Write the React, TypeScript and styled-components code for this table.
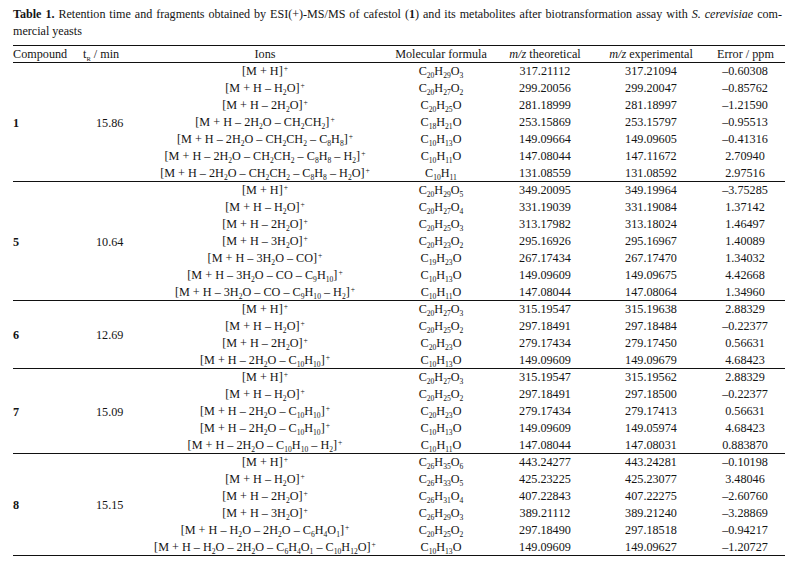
import React from "react";
import styled, { createGlobalStyle } from "styled-components";

const GlobalStyle = createGlobalStyle`
  html, body { margin: 0; padding: 0; background: #ffffff; }
  body {
    font-family: "Liberation Serif", "Times New Roman", serif;
    color: #141414;
  }
`;

const COLS = "70px 70px 224px 128px 80px 132px 68px";
const ROW_H = 17;

const Page = styled.div`
  width: 794px;
  height: 569px;
  box-sizing: border-box;
  padding: 6px 9px 0 13px;
`;

const Caption = styled.div`
  font-size: 12.1px;
  line-height: 17px;
  margin-bottom: 5px;
`;

const CaptionLine = styled.div<{ $justify?: boolean }>`
  text-align: ${(p) => (p.$justify ? "justify" : "left")};
  text-align-last: ${(p) => (p.$justify ? "justify" : "left")};
  word-spacing: ${(p) => (p.$justify ? "-1px" : "0")};
  padding-right: ${(p) => (p.$justify ? "3px" : "0")};
`;

const Table = styled.div`
  width: 772px;
  font-size: 12.2px;
`;

const HeaderRow = styled.div`
  display: grid;
  grid-template-columns: ${COLS};
  height: 18px;
  box-sizing: border-box;
  border-top: 1px solid #111;
  border-bottom: 1px solid #111;
  line-height: 16px;
  white-space: nowrap;
`;

const HeadCell = styled.div<{ $align?: "left" | "center"; $pr?: number }>`
  text-align: ${(p) => p.$align ?? "center"};
  padding-right: ${(p) => p.$pr ?? 0}px;
`;

const Group = styled.div<{ $rows: number }>`
  display: grid;
  grid-template-columns: ${COLS};
  grid-template-rows: repeat(${(p) => p.$rows}, ${ROW_H}px);
  height: ${(p) => p.$rows * ROW_H}px;
  box-sizing: border-box;
  border-bottom: 1px solid #111;
  line-height: ${ROW_H}px;
  white-space: nowrap;
`;

const CompoundCell = styled.div`
  grid-column: 1;
  grid-row: 1 / -1;
  align-self: center;
  font-weight: bold;
  padding-top: 1px;
`;

const TimeCell = styled.div`
  grid-column: 2;
  grid-row: 1 / -1;
  align-self: center;
  padding-left: 13px;
  padding-top: 1px;
`;

const Cell = styled.div<{ $pr?: number }>`
  text-align: center;
  padding-right: ${(p) => p.$pr ?? 0}px;
`;

const Sub = styled.sub<{ $size?: number }>`
  font-size: ${(p) => p.$size ?? 7.6}px;
  line-height: 0;
  vertical-align: baseline;
  position: relative;
  top: 2.6px;
`;

const Sup = styled.sup`
  font-size: 7.6px;
  line-height: 0;
  vertical-align: baseline;
  position: relative;
  top: -4px;
  margin-left: 1px;
`;

function chem(s: string) {
  const parts = s.split(/(_\{[^}]*\}|\^\{[^}]*\})/);
  return parts.map((p, i) => {
    if (p.startsWith("_{")) return <Sub key={i}>{p.slice(2, -1)}</Sub>;
    if (p.startsWith("^{")) return <Sup key={i}>{p.slice(2, -1)}</Sup>;
    return <React.Fragment key={i}>{p}</React.Fragment>;
  });
}

type Row = [string, string, string, string, string];
type GroupData = { id: string; tr: string; rows: Row[] };

const data: GroupData[] = [
  {
    id: "1",
    tr: "15.86",
    rows: [
      ["[M + H]^{+}", "C_{20}H_{29}O_{3}", "317.21112", "317.21094", "–0.60308"],
      ["[M + H – H_{2}O]^{+}", "C_{20}H_{27}O_{2}", "299.20056", "299.20047", "–0.85762"],
      ["[M + H – 2H_{2}O]^{+}", "C_{20}H_{25}O", "281.18999", "281.18997", "–1.21590"],
      ["[M + H – 2H_{2}O – CH_{2}CH_{2}]^{+}", "C_{18}H_{21}O", "253.15869", "253.15797", "–0.95513"],
      ["[M + H – 2H_{2}O – CH_{2}CH_{2} – C_{8}H_{8}]^{+}", "C_{10}H_{13}O", "149.09664", "149.09605", "–0.41316"],
      ["[M + H – 2H_{2}O – CH_{2}CH_{2} – C_{8}H_{8} – H_{2}]^{+}", "C_{10}H_{11}O", "147.08044", "147.11672", "2.70940"],
      ["[M + H – 2H_{2}O – CH_{2}CH_{2} – C_{8}H_{8} – H_{2}O]^{+}", "C_{10}H_{11}", "131.08559", "131.08592", "2.97516"],
    ],
  },
  {
    id: "5",
    tr: "10.64",
    rows: [
      ["[M + H]^{+}", "C_{20}H_{29}O_{5}", "349.20095", "349.19964", "–3.75285"],
      ["[M + H – H_{2}O]^{+}", "C_{20}H_{27}O_{4}", "331.19039", "331.19084", "1.37142"],
      ["[M + H – 2H_{2}O]^{+}", "C_{20}H_{25}O_{3}", "313.17982", "313.18024", "1.46497"],
      ["[M + H – 3H_{2}O]^{+}", "C_{20}H_{23}O_{2}", "295.16926", "295.16967", "1.40089"],
      ["[M + H – 3H_{2}O – CO]^{+}", "C_{19}H_{23}O", "267.17434", "267.17470", "1.34032"],
      ["[M + H – 3H_{2}O – CO – C_{9}H_{10}]^{+}", "C_{10}H_{13}O", "149.09609", "149.09675", "4.42668"],
      ["[M + H – 3H_{2}O – CO – C_{9}H_{10} – H_{2}]^{+}", "C_{10}H_{11}O", "147.08044", "147.08064", "1.34960"],
    ],
  },
  {
    id: "6",
    tr: "12.69",
    rows: [
      ["[M + H]^{+}", "C_{20}H_{27}O_{3}", "315.19547", "315.19638", "2.88329"],
      ["[M + H – H_{2}O]^{+}", "C_{20}H_{25}O_{2}", "297.18491", "297.18484", "–0.22377"],
      ["[M + H – 2H_{2}O]^{+}", "C_{20}H_{23}O", "279.17434", "279.17450", "0.56631"],
      ["[M + H – 2H_{2}O – C_{10}H_{10}]^{+}", "C_{10}H_{13}O", "149.09609", "149.09679", "4.68423"],
    ],
  },
  {
    id: "7",
    tr: "15.09",
    rows: [
      ["[M + H]^{+}", "C_{20}H_{27}O_{3}", "315.19547", "315.19562", "2.88329"],
      ["[M + H – H_{2}O]^{+}", "C_{20}H_{25}O_{2}", "297.18491", "297.18500", "–0.22377"],
      ["[M + H – 2H_{2}O – C_{10}H_{10}]^{+}", "C_{20}H_{23}O", "279.17434", "279.17413", "0.56631"],
      ["[M + H – 2H_{2}O – C_{10}H_{10}]^{+}", "C_{10}H_{13}O", "149.09609", "149.05974", "4.68423"],
      ["[M + H – 2H_{2}O – C_{10}H_{10} – H_{2}]^{+}", "C_{10}H_{11}O", "147.08044", "147.08031", "0.883870"],
    ],
  },
  {
    id: "8",
    tr: "15.15",
    rows: [
      ["[M + H]^{+}", "C_{26}H_{35}O_{6}", "443.24277", "443.24281", "–0.10198"],
      ["[M + H – H_{2}O]^{+}", "C_{26}H_{33}O_{5}", "425.23225", "425.23077", "3.48046"],
      ["[M + H – 2H_{2}O]^{+}", "C_{26}H_{31}O_{4}", "407.22843", "407.22275", "–2.60760"],
      ["[M + H – 3H_{2}O]^{+}", "C_{26}H_{29}O_{3}", "389.21112", "389.21240", "–3.28869"],
      ["[M + H – H_{2}O – 2H_{2}O – C_{6}H_{4}O_{1}]^{+}", "C_{20}H_{25}O_{2}", "297.18490", "297.18518", "–0.94217"],
      ["[M + H – H_{2}O – 2H_{2}O – C_{6}H_{4}O_{1} – C_{10}H_{12}O]^{+}", "C_{10}H_{13}O", "149.09609", "149.09627", "–1.20727"],
    ],
  },
];

export default function App() {
  return (
    <>
      <GlobalStyle />
      <Page>
        <Caption>
          <CaptionLine $justify>
            <b>Table 1.</b> Retention time and fragments obtained by ESI(+)-MS/MS of cafestol (<b>1</b>) and its
            metabolites after biotransformation assay with <i>S. cerevisiae</i> com-
          </CaptionLine>
          <CaptionLine>mercial yeasts</CaptionLine>
        </Caption>
        <Table>
          <HeaderRow>
            <HeadCell $align="left">Compound</HeadCell>
            <HeadCell $align="left">
              t<Sub $size={6.5}>R</Sub> / min
            </HeadCell>
            <HeadCell>Ions</HeadCell>
            <HeadCell>Molecular formula</HeadCell>
            <HeadCell>
              <i>m/z</i> theoretical
            </HeadCell>
            <HeadCell>
              <i>m/z</i> experimental
            </HeadCell>
            <HeadCell $pr={12}>Error / ppm</HeadCell>
          </HeaderRow>
          {data.map((g) => (
            <Group key={g.id} $rows={g.rows.length}>
              <CompoundCell>{g.id}</CompoundCell>
              <TimeCell>{g.tr}</TimeCell>
              {g.rows.map((r, i) => (
                <React.Fragment key={i}>
                  <Cell>{chem(r[0])}</Cell>
                  <Cell>{chem(r[1])}</Cell>
                  <Cell>{r[2]}</Cell>
                  <Cell>{r[3]}</Cell>
                  <Cell $pr={12}>{r[4]}</Cell>
                </React.Fragment>
              ))}
            </Group>
          ))}
        </Table>
      </Page>
    </>
  );
}
